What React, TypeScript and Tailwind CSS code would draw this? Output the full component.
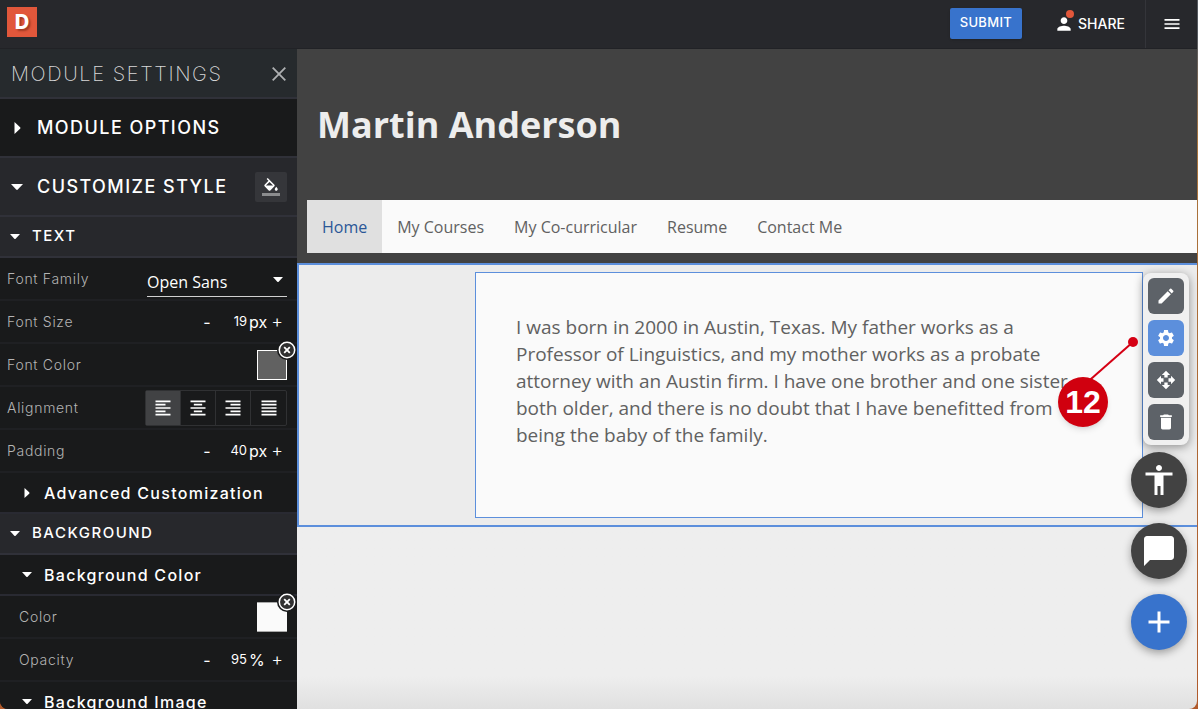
import { ReactNode } from "react";
import {
  MdAccessibility,
  MdAdd,
  MdChatBubble,
  MdDelete,
  MdEdit,
  MdFormatAlignCenter,
  MdFormatAlignJustify,
  MdFormatAlignLeft,
  MdFormatAlignRight,
  MdMenu,
  MdOpenWith,
  MdPerson,
  MdSettings,
} from "react-icons/md";

function Caret({ open, large = false }: { open: boolean; large?: boolean }) {
  return (
    <span className={large ? "flex w-3 justify-center" : "flex w-2.5 justify-center"}>
      {open ? (
        <svg className={large ? "h-1.5 w-3" : "h-[5px] w-2.5"} viewBox="0 0 12 6" aria-hidden="true">
          <path d="M0 0h12L6.8 5.6q-.8.8-1.6 0z" fill="currentColor" />
        </svg>
      ) : (
        <svg className={large ? "h-3 w-[7px]" : "h-2.5 w-1.5"} viewBox="0 0 6 12" aria-hidden="true">
          <path d="M0 0v12l5.6-5.2q.8-.8 0-1.6z" fill="currentColor" />
        </svg>
      )}
    </span>
  );
}

function Section({ title, open, action }: { title: string; open: boolean; action?: ReactNode }) {
  return (
    <div
      className={
        open
          ? "flex h-[59px] shrink-0 items-center border-b-2 border-[#303139] bg-[#27282c] pr-2.5"
          : "flex h-[59px] shrink-0 items-center border-b-2 border-[#303139] bg-[#191a1b] pr-2.5"
      }
    >
      <button
        type="button"
        aria-expanded={open}
        className="flex h-full flex-1 items-center gap-3.5 pl-[11px] text-left text-lg font-medium tracking-[0.08em] text-white"
      >
        <Caret open={open} large />
        {title}
      </button>
      {action}
    </div>
  );
}

function Group({ title }: { title: string }) {
  return (
    <button
      type="button"
      aria-expanded={true}
      className="flex h-[41px] shrink-0 items-center gap-3 border-b-2 border-[#303139] bg-[#27282c] pl-2.5 text-[15px] font-medium tracking-widest text-white"
    >
      <Caret open />
      {title}
    </button>
  );
}

function SubGroup({ title, open }: { title: string; open: boolean }) {
  return (
    <button
      type="button"
      aria-expanded={open}
      className="flex h-[41px] shrink-0 items-center gap-3 border-b-2 border-[#292a32] bg-[#191a1b] pl-[22px] text-base font-medium tracking-[0.08em] text-white"
    >
      <Caret open={open} />
      {title}
    </button>
  );
}

function Row({
  label,
  htmlFor,
  nested = false,
  children,
}: {
  label: string;
  htmlFor?: string;
  nested?: boolean;
  children: ReactNode;
}) {
  return (
    <div
      className={
        nested
          ? "flex h-[43px] shrink-0 items-center justify-between border-b-2 border-[#1f2023] pr-2.5 pl-[19px]"
          : "flex h-[43px] shrink-0 items-center justify-between border-b-2 border-[#1f2023] pr-2.5 pl-[7px]"
      }
    >
      <label htmlFor={htmlFor} className="text-sm font-light tracking-wider text-[#b4b4b4]">
        {label}
      </label>
      {children}
    </div>
  );
}

function Stepper({ id, value, unit }: { id: string; value: string; unit: string }) {
  return (
    <div className="flex items-center pr-1 text-white">
      <button type="button" aria-label="Decrease" className="w-3 text-base">
        -
      </button>
      <input
        id={id}
        defaultValue={value}
        className="w-9 bg-transparent pr-0.5 text-right text-[13px] outline-none"
      />
      <span className="w-[18px] text-base">{unit}</span>
      <button type="button" aria-label="Increase" className="w-4 text-right text-lg font-light">
        +
      </button>
    </div>
  );
}

function Swatch({ id, light = false }: { id: string; light?: boolean }) {
  return (
    <div className="relative">
      <button
        id={id}
        type="button"
        aria-label="Pick color"
        className={
          light
            ? "block size-[30px] border-y border-[#a8a8a8] bg-[#fafafa]"
            : "block size-[30px] border border-white bg-[#616161]"
        }
      />
      <button type="button" aria-label="Clear color" className="absolute -top-2.5 -right-2.5">
        <svg className="size-5" viewBox="0 0 20 20" aria-hidden="true">
          <circle cx="10" cy="10" r="10" fill="#191a1b" />
          <circle cx="10" cy="10" r="7.7" fill="#303030" stroke="#fff" strokeWidth="1.5" />
          <path d="M7.2 7.2l5.6 5.6M12.8 7.2l-5.6 5.6" stroke="#fff" strokeWidth="1.8" />
        </svg>
      </button>
    </div>
  );
}

const alignments = [
  { name: "Left", icon: <MdFormatAlignLeft /> },
  { name: "Center", icon: <MdFormatAlignCenter /> },
  { name: "Right", icon: <MdFormatAlignRight /> },
  { name: "Justify", icon: <MdFormatAlignJustify /> },
];

const tools = [
  { name: "Edit", icon: <MdEdit /> },
  { name: "Settings", icon: <MdSettings /> },
  { name: "Move", icon: <MdOpenWith /> },
  { name: "Delete", icon: <MdDelete /> },
];

const pages = ["Home", "My Courses", "My Co-curricular", "Resume", "Contact Me"];

function TopBar() {
  return (
    <header className="flex h-[49px] shrink-0 items-center border-b border-[#212226] bg-[#27282c] text-white">
      <a
        href="#"
        className="mb-1 ml-[7px] flex size-[30px] items-center justify-center bg-[#e1573b] text-xl font-extrabold text-white [text-shadow:2px_2px_2px_rgba(120,40,20,0.6)]"
      >
        D
      </a>
      <button
        type="button"
        className="mb-0.5 ml-auto h-[31px] rounded-xs bg-[#3873cc] px-2.5 text-[13px] font-medium tracking-wide shadow"
      >
        SUBMIT
      </button>
      <button type="button" className="ml-8 flex items-center gap-1 text-sm font-medium">
        <span className="relative">
          <MdPerson className="size-5" />
          <span className="absolute -top-1 right-0 size-2 rounded-full bg-[#e1573b]" />
        </span>
        SHARE
      </button>
      <button
        type="button"
        aria-label="Menu"
        className="ml-5 flex h-full w-[52px] items-center justify-center border-l border-[#34353a]"
      >
        <MdMenu className="size-5" />
      </button>
    </header>
  );
}

function Sidebar() {
  return (
    <aside className="flex w-[297px] shrink-0 flex-col overflow-hidden bg-[#191a1b]">
      <div className="flex h-[50px] shrink-0 items-center justify-between border-b-2 border-[#303139] bg-[#262a2d] pt-0.5 pr-[11px] pl-[11px]">
        <h2 className="text-xl font-extralight tracking-[0.08em] text-[#d8d8d8]">MODULE SETTINGS</h2>
        <button type="button" aria-label="Close" className="text-[#aeb0b2]">
          <svg className="size-3.5" viewBox="0 0 14 14" aria-hidden="true">
            <path d="M.7.7l12.6 12.6M13.3.7L.7 13.3" stroke="currentColor" strokeWidth="1.8" />
          </svg>
        </button>
      </div>
      <Section title="MODULE OPTIONS" open={false} />
      <Section
        title="CUSTOMIZE STYLE"
        open
        action={
          <button
            type="button"
            aria-label="Fill color"
            className="flex h-[30px] w-8 items-center justify-center rounded-xs bg-[#35363a]"
          >
            <svg className="size-[18px]" viewBox="0 0 24 24" aria-hidden="true">
              <path
                d="M16.56 8.94L7.62 0 6.21 1.41l2.38 2.38-5.15 5.15c-.59.59-.59 1.54 0 2.12l5.5 5.5c.29.29.68.44 1.06.44s.77-.15 1.06-.44l5.5-5.5c.59-.58.59-1.53 0-2.12zM5.21 10L10 5.21 14.79 10H5.21zM19 11.5s-2 2.17-2 3.5c0 1.1.9 2 2 2s2-.9 2-2c0-1.33-2-3.5-2-3.5z"
                fill="#fff"
              />
              <path d="M0 20h24v4H0z" fill="#8b8c8e" />
            </svg>
          </button>
        }
      />
      <Group title="TEXT" />
      <Row label="Font Family" htmlFor="font-family">
        <div className="relative mb-0.5 w-[140px] self-end">
          <select
            id="font-family"
            className="block h-[30px] w-full appearance-none border-b border-[#d0d0d0] bg-transparent font-['Open_Sans'] text-base text-white outline-none"
          >
            <option>Open Sans</option>
            <option>Roboto</option>
          </select>
          <span className="pointer-events-none absolute top-2.5 right-1 text-white">
            <Caret open />
          </span>
        </div>
      </Row>
      <Row label="Font Size" htmlFor="font-size">
        <Stepper id="font-size" value="19" unit="px" />
      </Row>
      <Row label="Font Color" htmlFor="font-color">
        <Swatch id="font-color" />
      </Row>
      <Row label="Alignment">
        <div className="flex divide-x divide-[#303133] rounded-xs border border-[#303133]">
          {alignments.map(({ name, icon }, i) => (
            <button
              key={name}
              type="button"
              aria-label={name}
              aria-pressed={i === 0}
              className={
                i === 0
                  ? "flex h-[34px] w-[35px] items-center justify-center bg-[#414244] text-xl text-white"
                  : "flex h-[34px] w-[35px] items-center justify-center text-xl text-white"
              }
            >
              {icon}
            </button>
          ))}
        </div>
      </Row>
      <Row label="Padding" htmlFor="padding">
        <Stepper id="padding" value="40" unit="px" />
      </Row>
      <SubGroup title="Advanced Customization" open={false} />
      <Group title="BACKGROUND" />
      <SubGroup title="Background Color" open />
      <Row label="Color" htmlFor="bg-color" nested>
        <Swatch id="bg-color" light />
      </Row>
      <Row label="Opacity" htmlFor="opacity" nested>
        <Stepper id="opacity" value="95" unit="%" />
      </Row>
      <SubGroup title="Background Image" open />
    </aside>
  );
}

function ModuleToolbar() {
  return (
    <div className="absolute top-2 right-2 flex flex-col gap-1.5 rounded-lg bg-[#f0f0f0] p-[5px] shadow-[0_2px_10px_rgba(0,0,0,0.4)]">
      {tools.map(({ name, icon }) => (
        <button
          key={name}
          type="button"
          aria-label={name}
          className={
            name === "Settings"
              ? "flex size-9 items-center justify-center rounded-md bg-[#5c8fdc] text-xl text-white"
              : "flex size-9 items-center justify-center rounded-md bg-[#5d6268] text-xl text-white"
          }
        >
          {icon}
        </button>
      ))}
    </div>
  );
}

function Callout() {
  return (
    <div className="absolute top-[72px] right-[59px] h-[90px] w-20">
      <svg className="h-full w-full" viewBox="0 0 80 90" aria-hidden="true">
        <path d="M75 5L25 49" stroke="#d50014" strokeWidth="2" />
        <circle cx="75" cy="5" r="5" fill="#d50014" />
      </svg>
      <span className="absolute bottom-0 left-0 flex size-[50px] items-center justify-center rounded-full bg-[#d0000f] font-['Liberation_Sans',sans-serif] text-[32px] font-bold text-white shadow-md">
        12
      </span>
    </div>
  );
}

function Canvas() {
  return (
    <main className="relative flex min-w-0 flex-1 flex-col bg-linear-to-b from-[#eeeeee] from-95% to-[#e0e0e0] font-['Open_Sans',sans-serif]">
      <div className="bg-[#424242] pb-2.5 pl-2.5">
        <h1 className="flex h-[151px] items-center pl-2.5 text-4xl font-bold text-[#ededed]">
          Martin Anderson
        </h1>
        <nav className="flex bg-[#fafafa]">
          {pages.map((page, i) => (
            <a
              key={page}
              href="#"
              className={
                i === 0
                  ? "flex h-[53px] items-center bg-[#e0e0e0] px-[15px] text-base text-[#2b5797]"
                  : "flex h-[53px] items-center px-[15px] text-base text-[#616161]"
              }
            >
              {page}
            </a>
          ))}
        </nav>
      </div>
      <section className="relative border-2 border-r-0 border-[#5c8fdc] bg-[#ececec] py-[7px] pr-[54px] pl-44">
        <div className="h-[246px] border border-[#5c8fdc] bg-[#fafafa] px-10 pt-[41px]">
          <p className="max-w-[560px] text-[19px] leading-[27px] text-[#616161]">
            I was born in 2000 in Austin, Texas. My father works as a Professor of Linguistics, and
            my mother works as a probate attorney with an Austin firm. I have one brother and one
            sister, both older, and there is no doubt that I have benefitted from being the baby of
            the family.
          </p>
        </div>
        <ModuleToolbar />
        <Callout />
      </section>
      <div className="absolute right-2.5 bottom-[59px] flex flex-col gap-[15px] text-4xl text-white">
        <button
          type="button"
          aria-label="Accessibility"
          className="flex size-14 items-center justify-center rounded-full bg-[#424242] shadow-[0_3px_8px_rgba(0,0,0,0.35)]"
        >
          <MdAccessibility />
        </button>
        <button
          type="button"
          aria-label="Comments"
          className="flex size-14 items-center justify-center rounded-full bg-[#424242] shadow-[0_3px_8px_rgba(0,0,0,0.35)]"
        >
          <MdChatBubble />
        </button>
        <button
          type="button"
          aria-label="Add module"
          className="flex size-14 items-center justify-center rounded-full bg-[#3873cc] shadow-[0_3px_8px_rgba(0,0,0,0.35)]"
        >
          <MdAdd />
        </button>
      </div>
    </main>
  );
}

export default function App() {
  return (
    <div className="h-screen bg-linear-to-b from-[#555a60] from-5% via-[#a8743c] via-20% to-[#b05a2c] pr-px font-['Inter','Liberation_Sans',sans-serif]">
      <div className="flex h-full flex-col overflow-hidden rounded-b-lg">
        <TopBar />
        <div className="flex min-h-0 flex-1">
          <Sidebar />
          <Canvas />
        </div>
      </div>
    </div>
  );
}
